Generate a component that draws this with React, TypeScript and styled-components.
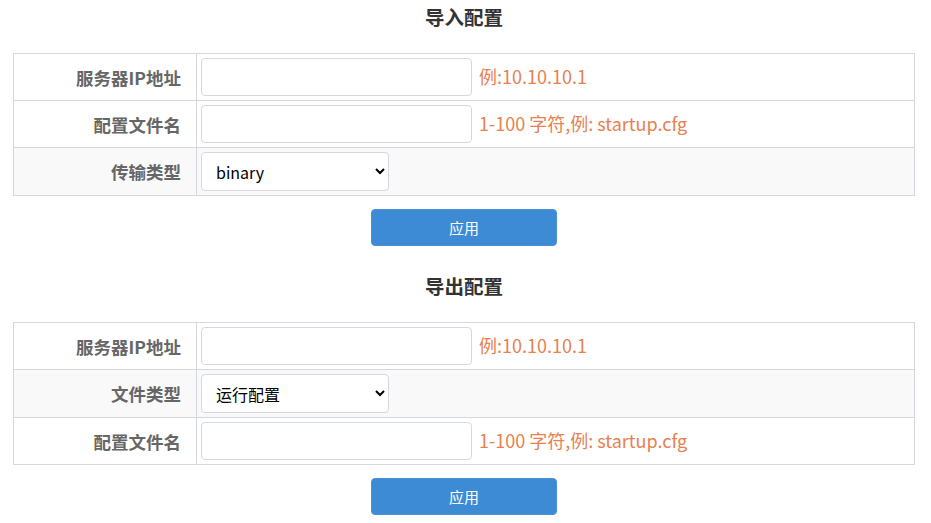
import React from "react";
import styled, { createGlobalStyle } from "styled-components";

const Global = createGlobalStyle`
  html, body { margin: 0; padding: 0; background: #fff; }
  body { font-family: "Noto Sans CJK SC", "Noto Sans", sans-serif; }
`;

const Page = styled.div`
  padding: 0 16px 0 13px;
  display: flex;
  flex-direction: column;
`;

const Section = styled.section`
  display: flex;
  flex-direction: column;
  align-items: stretch;
`;

const Title = styled.h2<{ $top: number }>`
  margin: ${(p) => p.$top}px 0 17px;
  height: 36px;
  line-height: 34px;
  font-size: 19.5px;
  font-weight: 700;
  color: #333;
  text-align: center;
`;

const Table = styled.table`
  width: 902px;
  border-collapse: collapse;
  border: 1px solid #d4d7e1;
`;

const Row = styled.tr<{ $shade?: boolean }>`
  background: ${(p) => (p.$shade ? "#f9f9f9" : "#fff")};
  border-bottom: 1px solid #d4d7e1;
`;

const Label = styled.th`
  width: 167px;
  padding: 0 15px 0 0;
  text-align: right;
  font-size: 17.5px;
  font-weight: 700;
  color: #666;
  border-right: 1px solid #d4d7e1;
  white-space: nowrap;
`;

const Cell = styled.td`
  padding: 4px 4px;
  display: flex;
  align-items: center;
  gap: 7px;
`;

const Input = styled.input`
  box-sizing: border-box;
  width: 271px;
  height: 38px;
  border: 1px solid #d5d8e2;
  border-radius: 4px;
  padding: 0 12px;
  font-size: 16px;
  font-family: inherit;
  background: #fff;
  outline: none;
`;

const Select = styled.select`
  box-sizing: border-box;
  width: 188px;
  height: 39px;
  border: 1px solid #d5d8e2;
  border-radius: 4px;
  padding: 0 10px;
  font-size: 16px;
  font-family: "Noto Sans CJK SC", "Noto Sans", sans-serif;
  color: #000;
  background: #fff;
  outline: none;
`;

const Hint = styled.span`
  font-size: 18px;
  color: #e8804f;
  white-space: nowrap;
  margin-bottom: 3px;
`;

const ButtonBar = styled.div`
  display: flex;
  justify-content: center;
  margin-top: 13px;
`;

const ApplyButton = styled.button`
  width: 186px;
  height: 37px;
  border: 1px solid #4a93d8;
  border-radius: 4px;
  background: #3d8bd5;
  color: #fff;
  font-size: 15px;
  font-family: inherit;
  cursor: pointer;
`;

export default function App() {
  return (
    <>
      <Global />
      <Page>
        <Section>
          <Title $top={0}>导入配置</Title>
          <Table>
            <tbody>
              <Row>
                <Label>服务器IP地址</Label>
                <Cell>
                  <Input type="text" />
                  <Hint>例:10.10.10.1</Hint>
                </Cell>
              </Row>
              <Row>
                <Label>配置文件名</Label>
                <Cell>
                  <Input type="text" />
                  <Hint>1-100 字符,例: startup.cfg</Hint>
                </Cell>
              </Row>
              <Row $shade>
                <Label>传输类型</Label>
                <Cell>
                  <Select defaultValue="binary">
                    <option value="binary">binary</option>
                    <option value="ascii">ascii</option>
                  </Select>
                </Cell>
              </Row>
            </tbody>
          </Table>
          <ButtonBar>
            <ApplyButton>应用</ApplyButton>
          </ButtonBar>
        </Section>
        <Section>
          <Title $top={23}>导出配置</Title>
          <Table>
            <tbody>
              <Row>
                <Label>服务器IP地址</Label>
                <Cell>
                  <Input type="text" />
                  <Hint>例:10.10.10.1</Hint>
                </Cell>
              </Row>
              <Row $shade>
                <Label>文件类型</Label>
                <Cell>
                  <Select defaultValue="running">
                    <option value="running">运行配置</option>
                    <option value="startup">启动配置</option>
                  </Select>
                </Cell>
              </Row>
              <Row>
                <Label>配置文件名</Label>
                <Cell>
                  <Input type="text" />
                  <Hint>1-100 字符,例: startup.cfg</Hint>
                </Cell>
              </Row>
            </tbody>
          </Table>
          <ButtonBar>
            <ApplyButton>应用</ApplyButton>
          </ButtonBar>
        </Section>
      </Page>
    </>
  );
}
